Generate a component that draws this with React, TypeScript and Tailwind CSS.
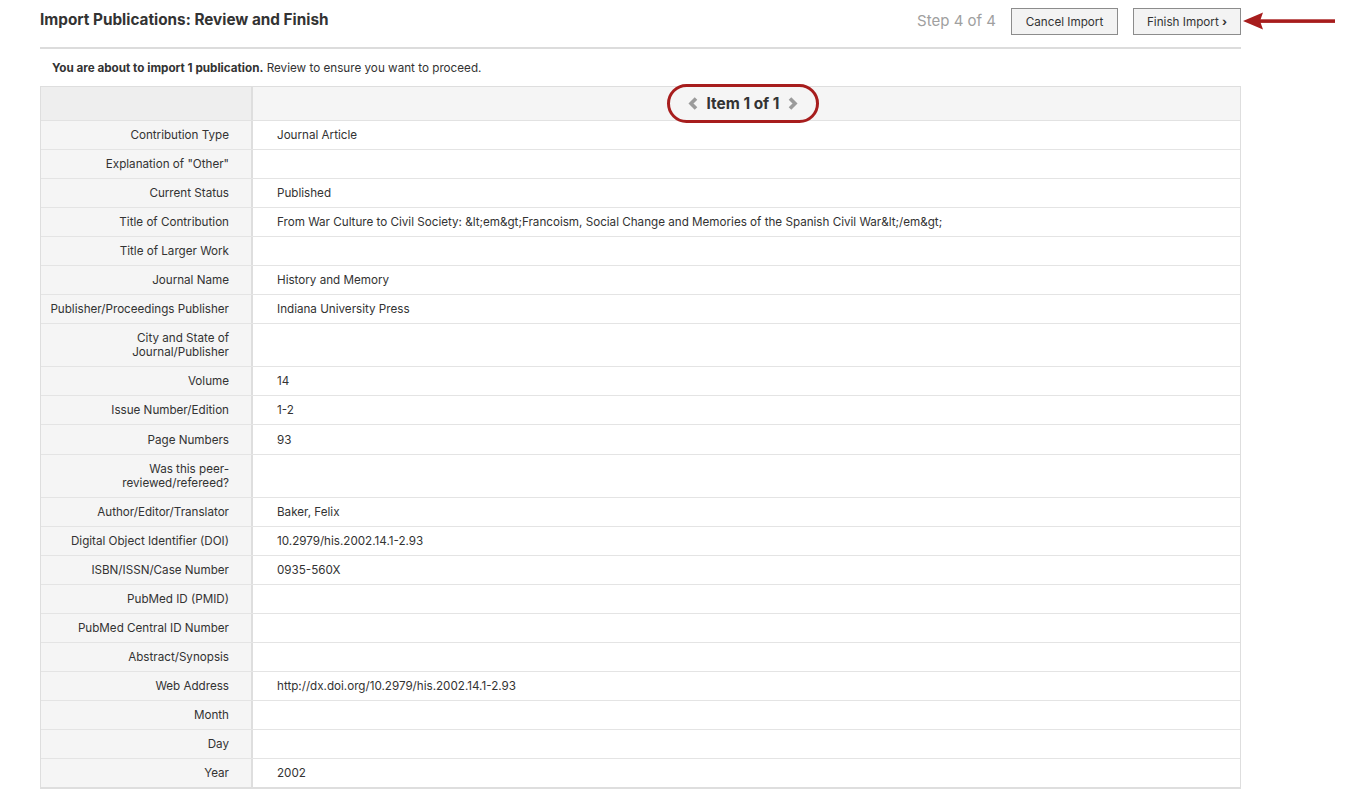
import React from "react";

type Row = { label: React.ReactNode; value?: string; extra?: boolean };

const rows: Row[] = [
  { label: "Contribution Type", value: "Journal Article" },
  { label: 'Explanation of "Other"' },
  { label: "Current Status", value: "Published" },
  {
    label: "Title of Contribution",
    value:
      "From War Culture to Civil Society: &lt;em&gt;Francoism, Social Change and Memories of the Spanish Civil War&lt;/em&gt;",
  },
  { label: "Title of Larger Work" },
  { label: "Journal Name", value: "History and Memory" },
  { label: "Publisher/Proceedings Publisher", value: "Indiana University Press" },
  {
    label: (
      <>
        City and State of
        <br />
        Journal/Publisher
      </>
    ),
  },
  { label: "Volume", value: "14" },
  { label: "Issue Number/Edition", value: "1-2" },
  { label: "Page Numbers", value: "93", extra: true },
  {
    label: (
      <>
        Was this peer-
        <br />
        reviewed/refereed?
      </>
    ),
  },
  { label: "Author/Editor/Translator", value: "Baker, Felix" },
  { label: "Digital Object Identifier (DOI)", value: "10.2979/his.2002.14.1-2.93" },
  { label: "ISBN/ISSN/Case Number", value: "0935-560X" },
  { label: "PubMed ID (PMID)" },
  { label: "PubMed Central ID Number" },
  { label: "Abstract/Synopsis" },
  { label: "Web Address", value: "http://dx.doi.org/10.2979/his.2002.14.1-2.93" },
  { label: "Month" },
  { label: "Day" },
  { label: "Year", value: "2002" },
];

function Chevron({ dir }: { dir: "left" | "right" }) {
  return (
    <svg width="10" height="13" viewBox="0 0 10 13" className="shrink-0">
      {dir === "left" ? (
        <path d="M8 1.5 L3 6.5 L8 11.5" fill="none" stroke="#9b9b9b" strokeWidth="3.6" />
      ) : (
        <path d="M2 1.5 L7 6.5 L2 11.5" fill="none" stroke="#9b9b9b" strokeWidth="3.6" />
      )}
    </svg>
  );
}

export default function App() {
  return (
    <div
      className="min-h-[806px] bg-white text-[#333]"
      style={{ fontFamily: "Inter, 'Noto Sans', sans-serif" }}
    >
      <div className="w-[1201px] ml-[40px]">
        {/* Header */}
        <div className="flex items-center justify-between pt-[8px] pb-[12px] border-b-2 border-[#dcdcdc] relative">
          <h1 className="text-[15.3px] font-bold leading-[20px] text-[#333] -mt-[3px]">
            Import Publications: Review and Finish
          </h1>
          <div className="flex items-center">
            <span className="text-[15px] text-[#a0a0a0] mr-[15px]">Step 4 of 4</span>
            <button className="h-[27px] w-[107px] border border-[#8c8c8c] bg-[#f3f3f3] text-[11.7px] text-[#333] mr-[15px] pt-[2px]">
              Cancel Import
            </button>
            <button className="h-[27px] w-[108px] border border-[#8c8c8c] bg-[#f3f3f3] text-[11.7px] text-[#333] pt-[2px]">
              Finish Import <span className="font-bold">›</span>
            </button>
          </div>
          {/* annotation arrow */}
          <svg
            className="absolute left-[1203px] top-[10px]"
            width="94"
            height="24"
            viewBox="0 0 94 24"
          >
            <rect x="16" y="9.3" width="76" height="3.6" fill="#a71d1d" />
            <polygon points="0,11 20,2.5 17,11 20,19.5" fill="#a71d1d" />
          </svg>
        </div>

        {/* Subtitle */}
        <p className="text-[11.7px] leading-[14px] pl-[12px] pt-[12px] pb-[11px]">
          <span className="font-bold">You are about to import 1 publication.</span> Review to ensure
          you want to proceed.
        </p>

        {/* Table */}
        <div className="border border-[#dedede] border-b-2">
          <div className="flex h-[34px] border-b border-[#e2e2e2]">
            <div className="w-[212px] shrink-0 bg-[#eeeeee] border-r-2 border-[#dedede]" />
            <div className="flex-1 bg-[#f5f5f5] relative">
              <div className="absolute left-[414px] top-[-3px] w-[152px] h-[39px] rounded-full border-[3.5px] border-[#a71d1d] flex items-center justify-center gap-[8px]">
                <Chevron dir="left" />
                <span className="text-[15.4px] font-bold text-[#333]">Item 1 of 1</span>
                <Chevron dir="right" />
              </div>
            </div>
          </div>
          {rows.map((r, i) => (
            <div
              key={i}
              className={`flex text-[11.65px] leading-[14px] ${i < rows.length - 1 ? "border-b border-[#e4e4e4]" : ""}`}
            >
              <div
                className={`w-[212px] shrink-0 bg-[#f5f5f5] border-r-2 border-[#dedede] text-right pr-[22px] ${r.extra ? "pt-[8px] pb-[7px]" : "py-[7px]"}`}
              >
                {r.label}
              </div>
              <div className={`flex-1 bg-white pl-[24px] ${r.extra ? "pt-[8px] pb-[7px]" : "py-[7px]"}`}>
                {r.value ?? ""}
              </div>
            </div>
          ))}
        </div>
      </div>
    </div>
  );
}
